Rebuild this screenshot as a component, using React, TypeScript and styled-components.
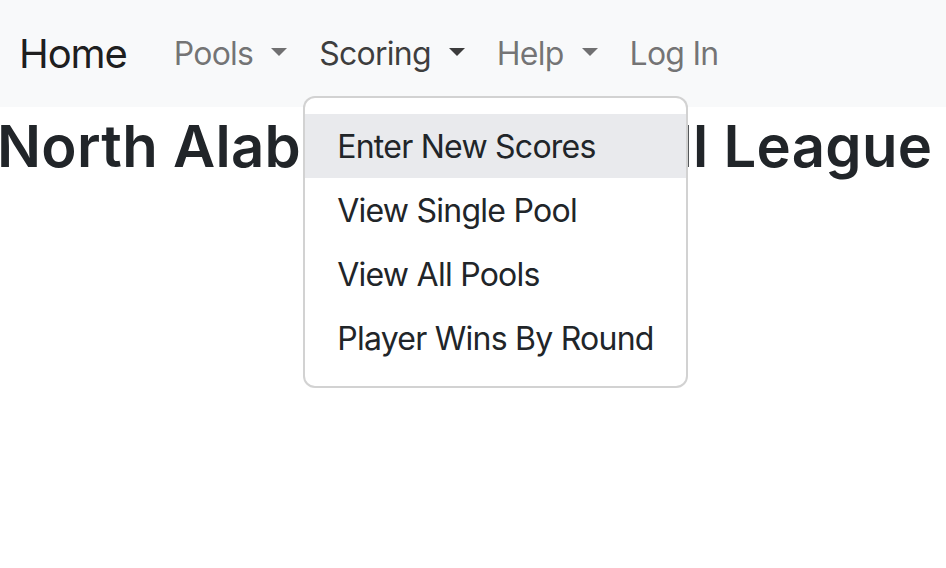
import React from 'react';
import styled, {createGlobalStyle} from "styled-components";

const menuItems = ["Enter New Scores", "View Single Pool", "View All Pools", "Player Wins By Round"]

const GlobalStyle = createGlobalStyle`
    body {
        margin: 0;
        padding: 0;
        background: #fff;
        font-family: Inter, "Noto Sans", "Liberation Sans", sans-serif;
        color: #212529;
    }
    #root {
        min-height: 568px;
        overflow: hidden;
    }
`

export default function App() {
    return (
        <>
            <GlobalStyle/>
            <StyledNavbar>
                <Brand href="#">Home</Brand>
                <NavList>
                    <NavItem>
                        <NavLink href="#">Pools<Caret/></NavLink>
                    </NavItem>
                    <NavItem>
                        <NavLink href="#" active>Scoring<Caret/></NavLink>
                        <DropdownMenu>
                            {menuItems.map((item, i) => (
                                <DropdownItem key={item} href="#" highlighted={i === 0}>{item}</DropdownItem>
                            ))}
                        </DropdownMenu>
                    </NavItem>
                    <NavItem>
                        <NavLink href="#">Help<Caret/></NavLink>
                    </NavItem>
                    <NavItem>
                        <NavLink href="#">Log In</NavLink>
                    </NavItem>
                </NavList>
            </StyledNavbar>
            <Title>North Alabama Pickleball League</Title>
        </>
    );
}

const StyledNavbar = styled.nav`
    display: flex;
    align-items: center;
    height: 107px;
    padding: 0 0 0 19px;
    background-color: #f8f9fa;
    position: relative;
    z-index: 2;
`
const Brand = styled.a`
    font-size: 40px;
    line-height: 60px;
    letter-spacing: -1.1px;
    color: rgba(0, 0, 0, 0.9);
    text-decoration: none;
    margin-right: 31px;
    padding: 10px 0;
`
const NavList = styled.ul`
    display: flex;
    list-style: none;
    margin: 0;
    padding: 0;
`
const NavItem = styled.li`
    position: relative;
`
const NavLink = styled.a<{ active?: boolean }>`
    display: block;
    padding: 16px;
    font-size: 32px;
    line-height: 48px;
    letter-spacing: -0.75px;
    text-decoration: none;
    color: ${props => props.active ? "rgba(0, 0, 0, 0.76)" : "rgba(0, 0, 0, 0.55)"};
    white-space: nowrap;
`
const Caret = styled.span`
    display: inline-block;
    margin-left: 18px;
    vertical-align: 9px;
    border-top: 8.5px solid;
    border-left: 8.5px solid transparent;
    border-right: 8.5px solid transparent;
`
const DropdownMenu = styled.div`
    position: absolute;
    top: 100%;
    left: 0;
    margin-top: 2px;
    padding: 16px 0;
    background: #fff;
    border: 2px solid rgba(0, 0, 0, 0.175);
    border-radius: 12px;
    display: flex;
    flex-direction: column;
`
const DropdownItem = styled.a<{ highlighted?: boolean }>`
    display: block;
    padding: 9px 32px 7px;
    font-size: 32px;
    line-height: 48px;
    letter-spacing: -0.75px;
    color: #212529;
    text-decoration: none;
    white-space: nowrap;
    background-color: ${props => props.highlighted ? "#e9eaed" : "transparent"};
`
const Title = styled.h1`
    margin: 5px 0 0 -3px;
    font-size: 58px;
    font-weight: 600;
    line-height: 1.2;
    letter-spacing: 0.3px;
    color: #212529;
    white-space: nowrap;
`
